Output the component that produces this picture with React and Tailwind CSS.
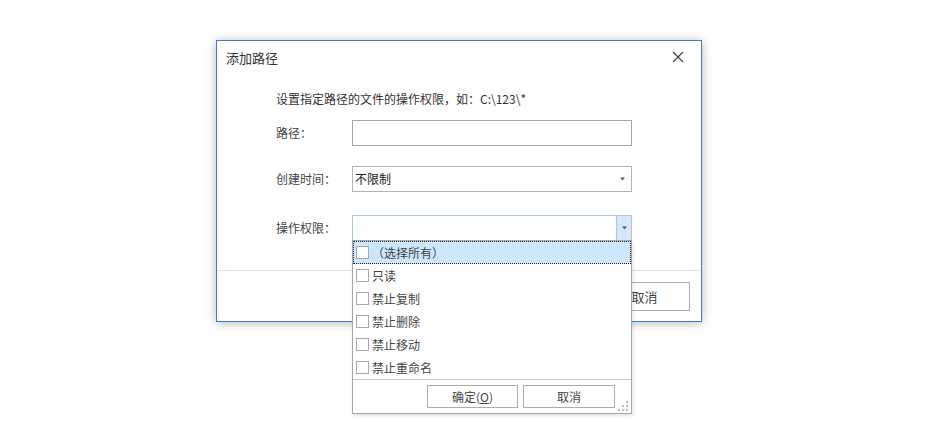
import React from "react";

function Checkbox() {
  return <span className="inline-block w-[13px] h-[13px] border border-[#a9a9a9] bg-white shrink-0" />;
}

function Arrow() {
  return (
    <svg width="7" height="4" viewBox="0 0 7 4" className="block">
      <polygon points="1,0.5 6,0.5 3.5,3.5" fill="#5a5a5a" />
    </svg>
  );
}

function Grip() {
  const dots = [
    [8, 0],
    [4, 4],
    [8, 4],
    [0, 8],
    [4, 8],
    [8, 8],
  ];
  return (
    <svg width="10" height="10" viewBox="0 0 10 10" className="block">
      {dots.map(([x, y], i) => (
        <rect key={i} x={x} y={y} width="2" height="2" fill="#b8b8b8" />
      ))}
    </svg>
  );
}

const items = ["只读", "禁止复制", "禁止删除", "禁止移动", "禁止重命名"];

export default function App() {
  return (
    <div className="w-[928px] h-[439px] bg-white overflow-hidden pt-[40px] pl-[216px] text-[12px] text-[#333] font-['Microsoft_YaHei','Noto_Sans_CJK_SC',sans-serif]">
      <div className="relative w-[486px] h-[282px] border border-[#3d7dc2] bg-white shadow-[0_1px_10px_rgba(0,0,0,0.28)] flex flex-col">
        {/* title bar */}
        <div className="h-[32px] flex items-center justify-between pl-[9px] pr-[17px] shrink-0">
          <span className="text-[13px] text-[#333] leading-none">添加路径</span>
          <svg width="12" height="12" viewBox="0 0 12 12" className="block">
            <path d="M1 1 L11 11 M11 1 L1 11" stroke="#444" strokeWidth="1.2" fill="none" />
          </svg>
        </div>

        {/* body */}
        <div className="pl-[59px] flex flex-col">
          <div className="mt-[17px] h-[18px] leading-[18px] text-[#333]">设置指定路径的文件的操作权限，如：C:\123\*</div>

          <div className="mt-[12px] flex items-center h-[26px]">
            <span className="w-[76px] text-[#444]">路径：</span>
            <div className="w-[280px] h-[26px] border border-[#a6a6a6] bg-white" />
          </div>

          <div className="mt-[20px] flex items-center h-[26px]">
            <span className="w-[76px] text-[#444]">创建时间：</span>
            <div className="w-[280px] h-[26px] border border-[#b4b4b4] bg-white flex items-center justify-between pl-[2px] pr-[5px]">
              <span className="text-[#222]">不限制</span>
              <Arrow />
            </div>
          </div>

          <div className="mt-[23px] flex items-center h-[26px]">
            <span className="w-[76px] text-[#444]">操作权限：</span>
            <div className="relative w-[280px] h-[26px]">
              <div className="w-full h-full border border-[#a9c6e4] bg-white flex justify-end">
                <div className="w-[15px] h-full bg-[#d6e8f8] border-l border-[#a9c6e4] flex items-center justify-center">
                  <Arrow />
                </div>
              </div>

              {/* dropdown overlay */}
              <div className="absolute left-0 top-[25px] z-10 w-[280px] border border-[#a6a6a6] bg-white shadow-[1px_2px_4px_rgba(0,0,0,0.12)] flex flex-col">
                <div className="h-[23px] bg-[#cce6fb] border border-dotted border-[#222] flex items-center pl-[2px] text-[#444]">
                  <Checkbox />
                  <span className="ml-[3px]">（选择所有）</span>
                </div>
                {items.map((t) => (
                  <div key={t} className="h-[23px] flex items-center pl-[3px] text-[#444]">
                    <Checkbox />
                    <span className="ml-[3px]">{t}</span>
                  </div>
                ))}
                <div className="relative border-t border-[#c8c8c8] pt-[5px] pb-[5px] pr-[16px] flex justify-end gap-[5px]">
                  <div className="w-[91px] h-[23px] border border-[#adadad] bg-white flex items-center justify-center text-[#444]">
                    确定(<span className="underline">O</span>)
                  </div>
                  <div className="w-[92px] h-[23px] border border-[#adadad] bg-white flex items-center justify-center text-[#444]">
                    取消
                  </div>
                  <div className="absolute right-[3px] bottom-[2px]">
                    <Grip />
                  </div>
                </div>
              </div>
            </div>
          </div>
        </div>

        {/* divider */}
        <div className="mt-[29px] h-px bg-[#e3e3e3]" />

        {/* footer */}
        <div className="pt-[11px] pr-[11px] flex justify-end gap-[8px]">
          <div className="w-[91px] h-[29px] border border-[#adadad] bg-white flex items-center justify-center text-[13px] text-[#444]">
            确定(<span className="underline">O</span>)
          </div>
          <div className="w-[91px] h-[29px] border border-[#adadad] bg-white flex items-center justify-center text-[13px] text-[#444]">
            取消
          </div>
        </div>
      </div>
    </div>
  );
}
